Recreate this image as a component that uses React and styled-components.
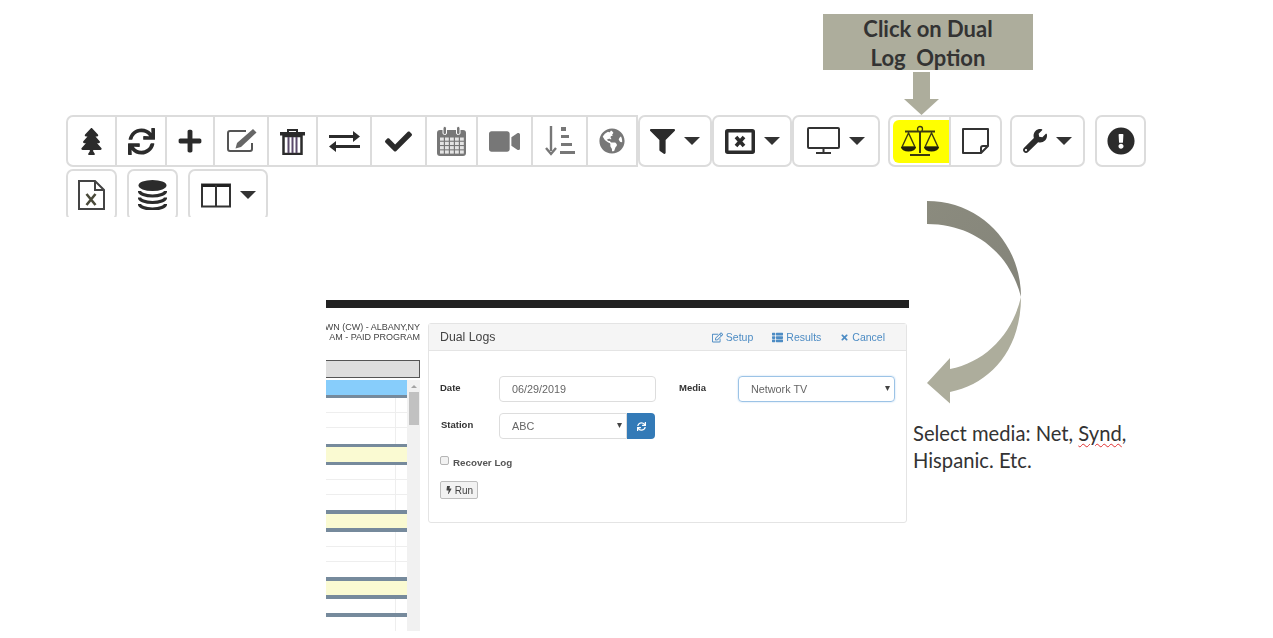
import styled, { createGlobalStyle } from "styled-components";
import {
  FaBolt,
  FaCheck,
  FaExclamationCircle,
  FaFilter,
  FaGlobeAmericas,
  FaPlus,
  FaRegEdit,
  FaSync,
  FaThList,
  FaTimes,
  FaTree,
  FaVideo,
  FaWrench,
} from "react-icons/fa";

const GlobalStyle = createGlobalStyle`
  html, body {
    margin: 0;
    padding: 0;
    background: #ffffff;
  }
`;

function XBoxIcon() {
  return (
    <svg width="30" height="25" viewBox="0 0 30 25">
      <rect x="1.750" y="1.750" width="26.500" height="21.500" fill="#fff" stroke="#2b2b2b" strokeWidth="3.500" rx="1" />
      <path d="M11 8l8 9M19 8l-8 9" stroke="#2b2b2b" strokeWidth="3.600" />
    </svg>
  );
}

function MonitorIcon() {
  return (
    <svg width="33" height="28" viewBox="0 0 33 28">
      <rect x="1" y="1" width="31" height="20" fill="none" stroke="#333" strokeWidth="2" rx="1" />
      <path d="M16.500 21v4M9 26h15" stroke="#333" strokeWidth="2" />
    </svg>
  );
}

function ColumnsIcon() {
  return (
    <svg width="30" height="25" viewBox="0 0 30 25">
      <rect x="1" y="1.500" width="28" height="22" fill="none" stroke="#333" strokeWidth="2" />
      <path d="M1 2.500h28" stroke="#222" strokeWidth="3" />
      <path d="M15 2v21" stroke="#333" strokeWidth="2" />
    </svg>
  );
}

function SortIcon() {
  return (
    <svg width="31" height="32" viewBox="0 0 31 32">
      <path d="M7 1v25M2 23l5 6 5-6" fill="none" stroke="#777" strokeWidth="2.400" />
      <path d="M17 2h5v4h-5zM17 10h8v3h-8zM17 18h11v3H17zM16 26h15v3H16z" fill="#777" />
    </svg>
  );
}

function EditIcon() {
  return (
    <svg width="31" height="26" viewBox="0 0 31 26">
      <path d="M20 3H4a2 2 0 0 0-2 2v16a2 2 0 0 0 2 2h20a2 2 0 0 0 2-2v-6" fill="none" stroke="#555" strokeWidth="2" />
      <path d="M27 1l3.500 3.500L15 19l-5.500 1.500L11 15z" fill="#666" />
    </svg>
  );
}

function TrashIcon() {
  return (
    <svg width="25" height="27" viewBox="0 0 25 27">
      <path d="M8 5V2h9v3" fill="none" stroke="#2b2b2b" strokeWidth="2" />
      <rect x="0" y="4" width="25" height="3.500" fill="#2b2b2b" />
      <rect x="3.500" y="8" width="18" height="18" fill="#fff" stroke="#2b2b2b" strokeWidth="2.500" />
      <path d="M8.500 9v16M12.500 9v16M16.500 9v16" stroke="#5a4a6a" strokeWidth="2" />
    </svg>
  );
}

function TransferIcon() {
  return (
    <svg width="31" height="21" viewBox="0 0 31 21">
      <path d="M0 5.500h26M5 15.500h26" stroke="#2b2b2b" strokeWidth="3" />
      <path d="M24 0l7 5.500-7 5.500zM7 10l-7 5.500L7 21z" fill="#2b2b2b" />
    </svg>
  );
}

function CalendarIcon() {
  const cells = [];
  for (let row = 0; row < 4; row++) {
    for (let col = 0; col < 5; col++) {
      cells.push(<rect key={`${row}-${col}`} x={3 + col * 5} y={11.500 + row * 4.300} width="3.800" height="3.200" fill="#e4e4e4" />);
    }
  }
  return (
    <svg width="29" height="30" viewBox="0 0 29 30">
      <rect x="0" y="4" width="29" height="26" rx="3" fill="#777" />
      {cells}
      <rect x="6" y="0.500" width="3.500" height="8" rx="1.500" fill="#777" stroke="#fff" strokeWidth="1" />
      <rect x="19.500" y="0.500" width="3.500" height="8" rx="1.500" fill="#777" stroke="#fff" strokeWidth="1" />
    </svg>
  );
}

function ScaleIcon() {
  return (
    <svg width="40" height="32" viewBox="0 0 40 32">
      <path d="M20 3v25M5 6.500h30M10 30h20" stroke="#3a3a10" strokeWidth="2" />
      <circle cx="20" cy="4" r="2.500" fill="#ffff00" stroke="#3a3a10" strokeWidth="1.300" />
      <path d="M8.500 8L2 22h13zM31.500 8L25 22h13z" fill="none" stroke="#3a3a10" strokeWidth="1.400" />
      <path d="M1 22h15a7.500 4.500 0 0 1-15 0zM24 22h15a7.500 4.500 0 0 1-15 0z" fill="#20200a" />
    </svg>
  );
}

function NoteIcon() {
  return (
    <svg width="27" height="26" viewBox="0 0 27 26">
      <path d="M1 1h25v17l-7 7H1z" fill="#fff" stroke="#333" strokeWidth="2" strokeLinejoin="round" />
      <path d="M25 18h-4c-1.500 0-2 1-2 2v4" fill="none" stroke="#333" strokeWidth="2" />
    </svg>
  );
}

function ExcelIcon() {
  return (
    <svg width="27" height="30" viewBox="0 0 27 30">
      <path d="M1 1h16l9 9v19H1z" fill="#fff" stroke="#444" strokeWidth="2" />
      <path d="M17 1v9h9" fill="none" stroke="#444" strokeWidth="2" />
      <path d="M8.500 14l9 11M17.500 14l-9 11" stroke="#4a4a3a" strokeWidth="2.600" />
    </svg>
  );
}

function DatabaseIcon() {
  return (
    <svg width="29" height="30" viewBox="0 0 29 30">
      <ellipse cx="14.500" cy="5.500" rx="14" ry="5.500" fill="#2b2b2b" />
      <path d="M1.500 11a13 5 0 0 0 26 0M1.500 17.500a13 5 0 0 0 26 0M1.500 24a13 5 0 0 0 26 0" fill="none" stroke="#2b2b2b" strokeWidth="3.200" />
    </svg>
  );
}

const tools = [
  { key: "tree", width: 51, first: true, icon: <FaTree size={27} /> },
  { key: "sync", width: 50, icon: <FaSync size={27} /> },
  { key: "plus", width: 48, icon: <FaPlus size={26} /> },
  { key: "edit", width: 54, icon: <EditIcon /> },
  { key: "trash", width: 49, icon: <TrashIcon /> },
  { key: "swap", width: 54, icon: <TransferIcon /> },
  { key: "check", width: 55, icon: <FaCheck size={27} /> },
  { key: "calendar", width: 51, muted: true, icon: <CalendarIcon /> },
  { key: "video", width: 55, muted: true, icon: <FaVideo size={31} /> },
  { key: "sort", width: 55, muted: true, icon: <SortIcon /> },
  { key: "globe", width: 50, muted: true, icon: <FaGlobeAmericas size={26} /> },
  { key: "filter", width: 74, rounded: true, caret: true, icon: <FaFilter size={25} /> },
  { key: "xbox", width: 80, rounded: true, caret: true, icon: <XBoxIcon /> },
  { key: "monitor", width: 88, rounded: true, caret: true, icon: <MonitorIcon /> },
  { key: "scale", width: 63, first: true, gap: 8, highlight: true, icon: <ScaleIcon /> },
  { key: "note", width: 51, last: true, icon: <NoteIcon /> },
  { key: "wrench", width: 75, rounded: true, gap: 8, caret: true, icon: <FaWrench size={24} /> },
  { key: "alert", width: 51, rounded: true, gap: 10, icon: <FaExclamationCircle size={28} /> },
  { key: "excel", width: 51, rounded: true, lower: true, icon: <ExcelIcon /> },
  { key: "db", width: 51, rounded: true, lower: true, gap: 10, icon: <DatabaseIcon /> },
  { key: "columns", width: 80, rounded: true, lower: true, gap: 10, caret: true, icon: <ColumnsIcon /> },
];

const grid = [
  { key: "blue", height: 15, bg: "#87cdfb" },
  { key: "b1", height: 3, bg: "#768a9c" },
  { key: "w1", height: 15, line: true },
  { key: "w2", height: 15, line: true },
  { key: "w3", height: 16 },
  { key: "b2", height: 3, bg: "#768a9c" },
  { key: "y1", height: 15, bg: "#fafad2" },
  { key: "b3", height: 3, bg: "#768a9c" },
  { key: "w4", height: 15, line: true },
  { key: "w5", height: 15, line: true },
  { key: "w6", height: 15 },
  { key: "b4", height: 4, bg: "#768a9c" },
  { key: "y2", height: 14, bg: "#fafad2" },
  { key: "b5", height: 4, bg: "#768a9c" },
  { key: "w7", height: 15, line: true },
  { key: "w8", height: 15, line: true },
  { key: "w9", height: 15 },
  { key: "b6", height: 4, bg: "#768a9c" },
  { key: "y3", height: 14, bg: "#fafad2" },
  { key: "b7", height: 4, bg: "#768a9c" },
  { key: "w10", height: 14 },
  { key: "b8", height: 4, bg: "#768a9c" },
  { key: "w11", height: 14 },
];

export default function App() {
  return (
    <Slide>
      <GlobalStyle />

      <Callout>
        Click on Dual
        <br />
        Log&nbsp; Option
      </Callout>

      <Drawing width="40" height="46" viewBox="0 0 40 46" $x={902} $y={71}>
        <path d="M11 1h17v27h9L19.500 44 2 28h9z" fill="#adad9c" />
      </Drawing>

      <Toolbar>
        {tools.map((t) => (
          <ToolButton
            key={t.key}
            $width={t.width}
            $first={t.first}
            $last={t.last}
            $rounded={t.rounded}
            $gap={t.gap}
            $muted={t.muted}
            $lower={t.lower}
          >
            {t.highlight && <Highlight />}
            <IconWrap>{t.icon}</IconWrap>
            {t.caret && <Caret />}
          </ToolButton>
        ))}
      </Toolbar>

      <Drawing width="110" height="220" viewBox="920 195 110 220" $x={920} $y={195}>
        <defs>
          <linearGradient id="upperBend" x1="0" y1="0" x2="1" y2="1">
            <stop offset="0" stopColor="#8b8b7e" />
            <stop offset="1" stopColor="#84847a" />
          </linearGradient>
        </defs>
        <path d="M927 201C982 201 1021 245 1021 297C1010 254 975 224 927 224Z" fill="url(#upperBend)" />
        <path d="M1021 297C1021 350 990 384 950 392L950 403.500L927 383L950 358L950 369C985 362 1012 335 1021 297Z" fill="#adad9c" />
      </Drawing>

      <Shot>
        <BlackBar />
        <ShotBody>
          <LogColumn>
            <LogTitle>
              <span>WN (CW) - ALBANY,NY</span>
              <span>AM - PAID PROGRAM</span>
            </LogTitle>
            <LogSearch />
            <LogGrid>
              <LogRows>
                {grid.map((r) => (
                  <LogRow key={r.key} $height={r.height} $bg={r.bg} $line={r.line} />
                ))}
              </LogRows>
              <Scrollbar>
                <ScrollArrow />
                <ScrollThumb />
              </Scrollbar>
            </LogGrid>
          </LogColumn>

          <Panel>
            <PanelHead>
              <PanelTitle>Dual Logs</PanelTitle>
              <PanelLinks>
                <PanelLink><FaRegEdit size={11} /> Setup</PanelLink>
                <PanelLink><FaThList size={11} /> Results</PanelLink>
                <PanelLink><FaTimes size={9} /> Cancel</PanelLink>
              </PanelLinks>
            </PanelHead>
            <PanelBody>
              <FormRow>
                <FieldLabel $width={59}>Date</FieldLabel>
                <Field $width={157}>06/29/2019</Field>
                <FieldLabel $width={59} $indent={23}>Media</FieldLabel>
                <Field $width={157} $focus>
                  Network TV
                  <SelectArrow>▾</SelectArrow>
                </Field>
              </FormRow>
              <FormRow>
                <FieldLabel $width={59} $nudge>Station</FieldLabel>
                <Field $width={128} $joined>
                  ABC
                  <SelectArrow>▾</SelectArrow>
                </Field>
                <RefreshButton><FaSync size={9} /></RefreshButton>
              </FormRow>
              <CheckRow>
                <CheckBox />
                Recover Log
              </CheckRow>
              <RunButton><FaBolt size={8} /> Run</RunButton>
            </PanelBody>
          </Panel>
        </ShotBody>
      </Shot>

      <Note>
        Select media: Net, <Misspelled>Synd</Misspelled>,
        <br />
        Hispanic. Etc.
      </Note>
    </Slide>
  );
}

const Slide = styled.div`
  position: relative;
  width: 1273px;
  height: 638px;
  overflow: hidden;
  background: #ffffff;
  font-family: "Liberation Sans", Arial, sans-serif;
`;

const Callout = styled.div`
  position: absolute;
  left: 823px;
  top: 14px;
  width: 210px;
  height: 56px;
  background: #adad9c;
  color: #333333;
  font-family: Lato, "Open Sans", sans-serif;
  font-size: 22px;
  font-weight: 700;
  line-height: 29px;
  text-align: center;
`;

const Drawing = styled.svg`
  position: absolute;
  left: ${(p) => p.$x}px;
  top: ${(p) => p.$y}px;
`;

const Toolbar = styled.div`
  position: absolute;
  left: 66px;
  top: 115px;
  width: 1090px;
  height: 102px;
  overflow: hidden;
  display: flex;
  flex-wrap: wrap;
  align-content: flex-start;
  row-gap: 1px;
`;

const ToolButton = styled.div`
  position: relative;
  box-sizing: border-box;
  width: ${(p) => p.$width}px;
  height: 52px;
  margin-left: ${(p) => p.$gap || 0}px;
  margin-top: ${(p) => (p.$lower ? "1px" : "0")};
  display: flex;
  align-items: center;
  justify-content: center;
  gap: 9px;
  border: 2px solid #dcdcdc;
  border-left-width: ${(p) => (p.$first || p.$rounded ? "2px" : "0")};
  border-radius: ${(p) =>
    p.$rounded ? "7px" : p.$first ? "7px 0 0 7px" : p.$last ? "0 7px 7px 0" : "0"};
  color: ${(p) => (p.$muted ? "#777777" : "#2b2b2b")};
  background: #ffffff;
`;

const IconWrap = styled.span`
  position: relative;
  display: flex;
  filter: blur(0.4px);
`;

const Highlight = styled.span`
  position: absolute;
  left: 3px;
  right: 0;
  top: 3px;
  bottom: 2px;
  background: #ffff00;
  border-radius: 6px 0 0 6px;
`;

const Caret = styled.span`
  width: 0;
  height: 0;
  border-left: 8px solid transparent;
  border-right: 8px solid transparent;
  border-top: 8px solid #333333;
`;

const Shot = styled.div`
  position: absolute;
  left: 326px;
  top: 300px;
  width: 583px;
  height: 331px;
  overflow: hidden;
`;

const BlackBar = styled.div`
  height: 8px;
  background: #222222;
`;

const ShotBody = styled.div`
  display: flex;
  gap: 8px;
  align-items: flex-start;
  filter: blur(0.3px);
`;

const LogColumn = styled.div`
  width: 94px;
  flex: none;
`;

const LogTitle = styled.div`
  height: 52px;
  padding-top: 14px;
  box-sizing: border-box;
  display: flex;
  flex-direction: column;
  align-items: flex-end;
  font-size: 9px;
  line-height: 10px;
  color: #444444;
  white-space: nowrap;
`;

const LogSearch = styled.div`
  box-sizing: border-box;
  height: 18px;
  background: #dedede;
  border: 1.500px solid #555555;
  border-left: none;
`;

const LogGrid = styled.div`
  display: flex;
  margin-top: 2px;
`;

const LogRows = styled.div`
  width: 81px;
  background: linear-gradient(#eeeeee, #eeeeee) 69px 15px / 1px 100% no-repeat;
`;

const LogRow = styled.div`
  box-sizing: border-box;
  height: ${(p) => p.$height}px;
  background: ${(p) => p.$bg || "transparent"};
  border-bottom: ${(p) => (p.$line ? "1px solid #eeeeee" : "none")};
`;

const Scrollbar = styled.div`
  width: 13px;
  background: #f1f1f1;
  display: flex;
  flex-direction: column;
  align-items: center;
`;

const ScrollArrow = styled.span`
  margin-top: 5px;
  width: 0;
  height: 0;
  border-left: 3px solid transparent;
  border-right: 3px solid transparent;
  border-bottom: 3px solid #a3a3a3;
`;

const ScrollThumb = styled.div`
  margin-top: 4px;
  width: 10px;
  height: 33px;
  background: #c1c1c1;
`;

const Panel = styled.div`
  box-sizing: border-box;
  width: 479px;
  height: 200px;
  margin-top: 15px;
  flex: none;
  border: 1px solid #e4e4e4;
  border-radius: 3px;
  color: #333333;
`;

const PanelHead = styled.div`
  box-sizing: border-box;
  height: 27px;
  display: flex;
  align-items: center;
  justify-content: space-between;
  padding: 0 21px 0 11px;
  background: #f5f5f5;
  border-bottom: 1px solid #e4e4e4;
`;

const PanelTitle = styled.div`
  font-size: 12.300px;
  color: #444444;
`;

const PanelLinks = styled.div`
  display: flex;
  gap: 19px;
`;

const PanelLink = styled.span`
  font-size: 10.500px;
  color: #4d8cc4;
  display: flex;
  align-items: center;
  gap: 3px;
`;

const PanelBody = styled.div`
  padding: 25px 0 0 11px;
`;

const FormRow = styled.div`
  display: flex;
  align-items: center;
  height: 26px;
  margin-bottom: 11px;
`;

const FieldLabel = styled.div`
  box-sizing: border-box;
  width: ${(p) => p.$width + (p.$indent || 0)}px;
  padding-left: ${(p) => (p.$indent || 0) + (p.$nudge ? 1 : 0)}px;
  margin-top: -3px;
  font-size: 9.500px;
  font-weight: 700;
  color: #333333;
`;

const Field = styled.div`
  position: relative;
  box-sizing: border-box;
  width: ${(p) => p.$width}px;
  height: 26px;
  display: flex;
  align-items: center;
  padding-left: 12px;
  font-size: 10.800px;
  color: #666666;
  border: 1px solid ${(p) => (p.$focus ? "#9cc3e6" : "#dddddd")};
  border-radius: ${(p) => (p.$joined ? "4px 0 0 4px" : "4px")};
  box-shadow: ${(p) => (p.$focus ? "0 0 2px #b8d6f0" : "none")};
`;

const SelectArrow = styled.span`
  position: absolute;
  right: 4px;
  top: 5px;
  font-size: 10px;
  color: #444444;
`;

const RefreshButton = styled.div`
  box-sizing: border-box;
  width: 28px;
  height: 26px;
  display: flex;
  align-items: center;
  justify-content: center;
  background: #337ab7;
  color: #ffffff;
  border-radius: 0 4px 4px 0;
`;

const CheckRow = styled.div`
  display: flex;
  align-items: center;
  gap: 4px;
  margin-top: 17px;
  height: 12px;
  font-size: 9.800px;
  font-weight: 700;
  color: #555555;
`;

const CheckBox = styled.span`
  box-sizing: border-box;
  width: 9px;
  height: 9px;
  margin-top: -4px;
  background: #f2f2f2;
  border: 1px solid #b5b5b5;
  border-radius: 2px;
`;

const RunButton = styled.div`
  box-sizing: border-box;
  width: 38px;
  height: 18px;
  margin-top: 13px;
  display: flex;
  align-items: center;
  justify-content: center;
  gap: 2px;
  font-size: 10px;
  color: #444444;
  background: #f2f2f2;
  border: 1px solid #bdbdbd;
  border-radius: 2px;
`;

const Note = styled.div`
  position: absolute;
  left: 913px;
  top: 420px;
  font-family: Lato, "Open Sans", sans-serif;
  font-size: 20.200px;
  line-height: 27px;
  color: #333333;
  white-space: nowrap;
`;

const Misspelled = styled.span`
  text-decoration: underline wavy #e03030 1px;
  text-underline-offset: 2px;
`;
